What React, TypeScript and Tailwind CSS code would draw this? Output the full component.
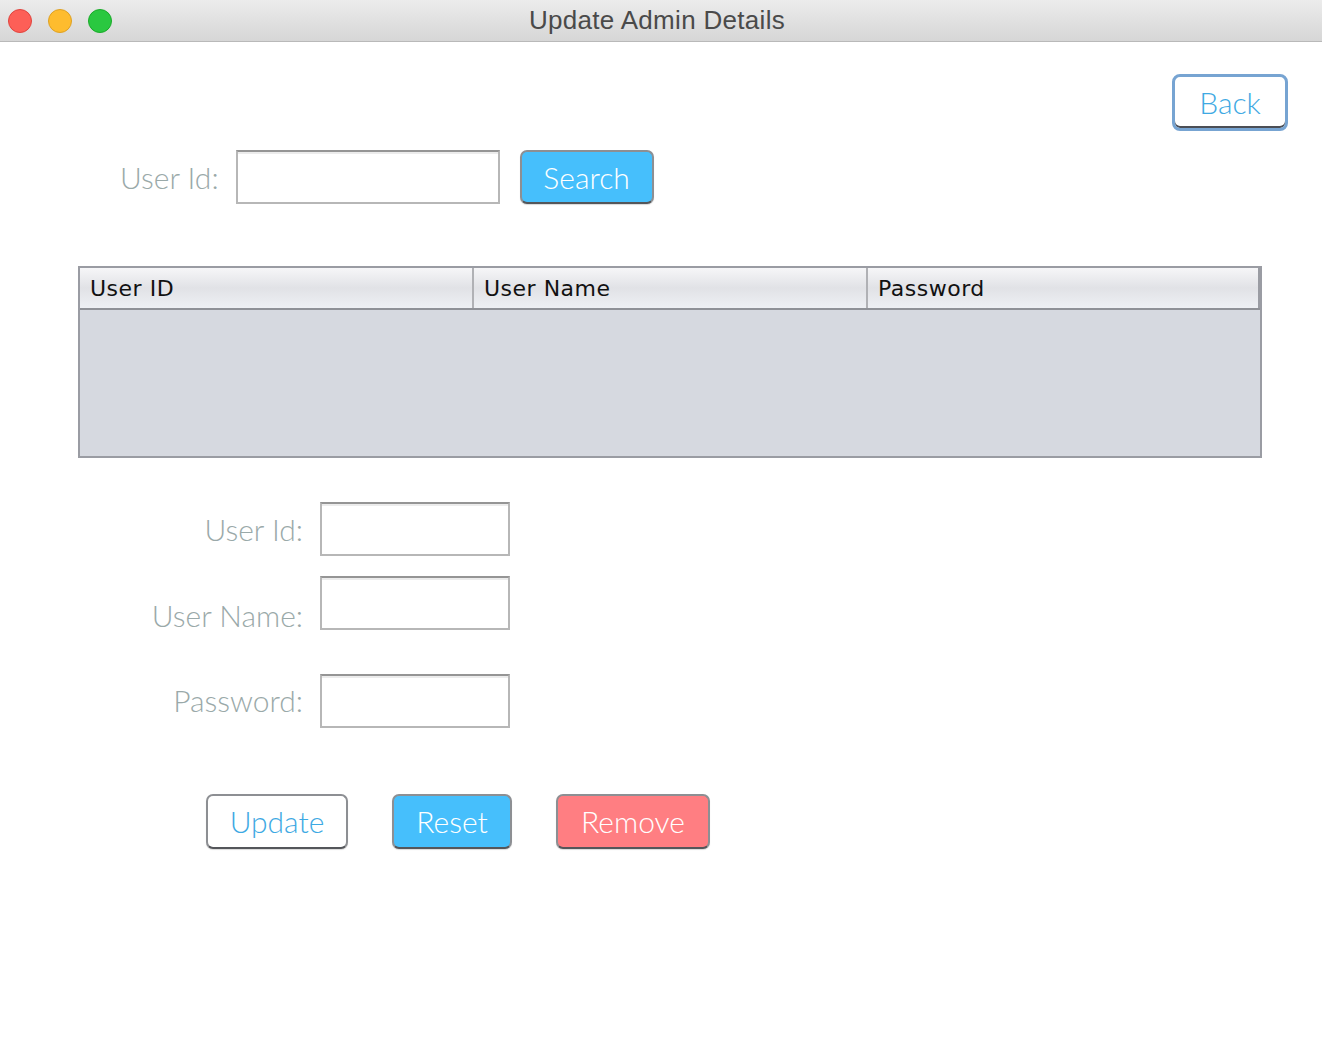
import React from "react";

const lato = "font-['Lato',sans-serif] font-light";
const btn = "flex items-center justify-center rounded-[7px] border-2 border-[#8d8f93] border-b-[#54565a] text-[30px] shadow-[0_1px_1px_rgba(0,0,0,0.15)]";

function Field({ label, pad }: { label: string; pad: string }) {
  return <div className="flex h-[54px] items-start gap-[17px]">
    <div className={`w-[303px] text-right text-[30px] leading-[36px] text-[#9aa9a9] ${lato} ${pad}`}>{label}</div>
    <div className="h-[54px] w-[190px] border-2 border-[#b7b7b7] border-t-[#959595] bg-white shadow-[inset_0_2px_0_#ececec]" />
  </div>;
}

export default function App() {
  return <div className="h-[1042px] w-[1322px] overflow-hidden bg-white">
    <div className="relative flex h-[42px] items-center border-b border-[#b9b9b9] bg-gradient-to-b from-[#ececec] to-[#d6d6d6]">
      <div className="flex gap-[16px] pl-[8px]">
        <span className="h-[24px] w-[24px] rounded-full border border-[#e0443e] bg-[#fd5f57]" />
        <span className="h-[24px] w-[24px] rounded-full border border-[#dea123] bg-[#febc2e]" />
        <span className="h-[24px] w-[24px] rounded-full border border-[#1aab29] bg-[#2ac840]" />
      </div>
      <div className="absolute inset-x-0 top-0 flex h-[41px] items-center justify-center pr-[8px] font-['Liberation_Sans',Arial,sans-serif] text-[26px] tracking-[0.3px] text-[#4a4a4a]">Update Admin Details</div>
    </div>

    <div className="flex justify-end pr-[34px] pt-[32px]">
      <button className={`h-[57px] w-[116px] rounded-[8px] border-[3px] border-[#77a4d2] bg-white text-[#3ea9e3] shadow-[inset_0_-2px_0_#4b4e55] ${lato} flex items-center justify-center text-[30px]`}>Back</button>
    </div>

    <div className="mt-[19px] flex items-center pl-[120px]">
      <div className={`text-[30px] text-[#9aa9a9] ${lato}`}>User Id:</div>
      <div className="ml-[17px] h-[54px] w-[264px] border-2 border-[#b7b7b7] border-t-[#959595] bg-white shadow-[inset_0_2px_0_#ececec]" />
      <button className={`ml-[20px] h-[54px] w-[134px] bg-[#46bffc] text-white ${btn} ${lato}`}>Search</button>
    </div>

    <div className="ml-[78px] mt-[62px] h-[192px] w-[1184px] border-2 border-[#9a9ca3] bg-[#d6d9e0]">
      <div className="flex h-[42px] border-b-2 border-[#8f9197] bg-gradient-to-b from-[#f6f6f8] via-[#e1e2e6] to-[#eef0f4] font-['DejaVu_Sans',sans-serif] text-[22px] tracking-[0.5px] text-[#111]">
        <div className="flex w-[394px] items-center border-r-2 border-[#b0b1b5] pl-[10px]">User ID</div>
        <div className="flex w-[394px] items-center border-r-2 border-[#b0b1b5] pl-[10px]">User Name</div>
        <div className="flex w-[392px] items-center border-r-2 border-[#9a9ca3] pl-[10px]">Password</div>
      </div>
    </div>

    <div className="mt-[44px] flex flex-col">
      <Field label="User Id:" pad="pt-[9px]" />
      <div className="mt-[20px]"><Field label="User Name:" pad="pt-[21px]" /></div>
      <div className="mt-[44px]"><Field label="Password:" pad="pt-[8px]" /></div>
    </div>

    <div className={`mt-[66px] flex gap-[44px] pl-[206px] ${lato}`}>
      <button className={`h-[55px] w-[142px] bg-white text-[#3ea9e3] ${btn}`}>Update</button>
      <button className={`h-[55px] w-[120px] bg-[#46bffc] text-white ${btn}`}>Reset</button>
      <button className={`h-[55px] w-[154px] bg-[#ff7e82] text-white ${btn}`}>Remove</button>
    </div>
  </div>;
}
